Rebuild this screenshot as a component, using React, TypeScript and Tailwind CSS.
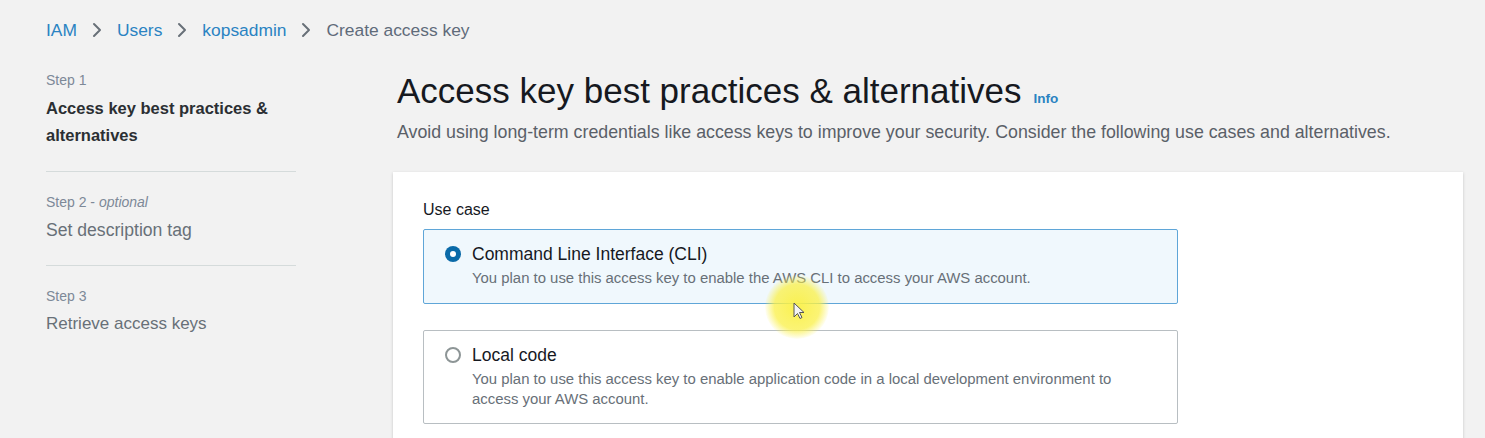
import React from "react";

function Chevron() {
  return (
    <svg width="10" height="16" viewBox="0 0 10 16" className="shrink-0">
      <path d="M2 2l6 6-6 6" fill="none" stroke="#687078" strokeWidth="2" strokeLinecap="round" strokeLinejoin="round" />
    </svg>
  );
}

function Radio({ checked }: { checked: boolean }) {
  return checked ? (
    <span className="mt-[3px] flex h-[16px] w-[16px] shrink-0 items-center justify-center rounded-full bg-[#0a6aa8]">
      <span className="h-[6px] w-[6px] rounded-full bg-white" />
    </span>
  ) : (
    <span className="mt-[3px] h-[16px] w-[16px] shrink-0 rounded-full border-2 border-[#8d9596] bg-white" />
  );
}

const steps = [
  { label: "Step 1", title: "Access key best practices & alternatives", cls: "text-[16.5px] font-bold leading-[27px] text-[#2b2f33]" },
  { label: "Step 2", optional: true, title: "Set description tag", cls: "text-[17.6px] leading-[26px] text-[#687078]" },
  { label: "Step 3", title: "Retrieve access keys", cls: "text-[17px] leading-[26px] text-[#687078]" },
];

export default function App() {
  return (
    <div
      className="relative h-[438px] w-[1485px] overflow-hidden bg-[#f2f2f2] text-[#16191f]"
      style={{ fontFamily: '"Liberation Sans", Arial, sans-serif' }}
    >
      {/* Breadcrumbs */}
      <nav className="flex items-center gap-[15px] pl-[46px] pt-[19px] text-[17.4px] leading-[22px]">
        <span className="text-[#2a83c2]">IAM</span>
        <Chevron />
        <span className="text-[#2a83c2]">Users</span>
        <Chevron />
        <span className="text-[#2a83c2]">kopsadmin</span>
        <Chevron />
        <span className="text-[#5f6b7a]">Create access key</span>
      </nav>

      <div className="flex pt-[30px]">
        {/* Wizard steps */}
        <aside className="ml-[46px] w-[250px] shrink-0">
          {steps.map((s, i) => (
            <div
              key={s.label}
              className={
                i === 0
                  ? "pb-[22px]"
                  : i === 1
                    ? "border-t border-[#d5dbdb] pt-[21px] pb-[22px]"
                    : "border-t border-[#d5dbdb] pt-[21px] pb-[20px]"
              }
            >
              <div className="text-[14px] leading-[18px] text-[#7d8998]">
                {s.label}
                {s.optional && (
                  <>
                    {" - "}
                    <i>optional</i>
                  </>
                )}
              </div>
              <div className={"mt-[6px] " + s.cls}>{s.title}</div>
            </div>
          ))}
        </aside>

        {/* Main content */}
        <main className="ml-[101px] mr-[22px] flex-1">
          <div className="flex items-baseline gap-[12px]">
            <h1 className="text-[35px] font-normal leading-[40px] text-[#16191f]">
              Access key best practices &amp; alternatives
            </h1>
            <span className="text-[13.5px] font-bold text-[#2a83c2]">Info</span>
          </div>
          <p className="mt-[10px] text-[17.8px] leading-[22px] text-[#5a6068]">
            Avoid using long-term credentials like access keys to improve your security. Consider the following use
            cases and alternatives.
          </p>

          <section className="-ml-[4px] mt-[29px] h-[300px] bg-white px-[30px] pt-[27px] shadow-[0_1px_3px_rgba(0,0,0,0.18)]">
            <div className="text-[16px] leading-[22px] text-[#16191f]">Use case</div>
            <div className="mt-[8px] flex w-[755px] flex-col gap-[26px]">
              <div className="flex gap-[11px] rounded-[2px] border border-[#5fa6d8] bg-[#f0f8fd] px-[21px] pt-[13px] pb-[15px]">
                <Radio checked />
                <div>
                  <div className="text-[17.5px] leading-[22px] text-[#16191f]">Command Line Interface (CLI)</div>
                  <div className="mt-[3px] text-[14.9px] leading-[20px] text-[#687078]">
                    You plan to use this access key to enable the AWS CLI to access your AWS account.
                  </div>
                </div>
              </div>
              <div className="flex gap-[11px] rounded-[2px] border border-[#b8bec2] bg-white px-[21px] pt-[13px] pb-[14px]">
                <Radio checked={false} />
                <div>
                  <div className="text-[17.5px] leading-[22px] text-[#16191f]">Local code</div>
                  <div className="mt-[3px] text-[14.9px] leading-[20px] text-[#687078]">
                    You plan to use this access key to enable application code in a local development environment to
                    access your AWS account.
                  </div>
                </div>
              </div>
            </div>
          </section>
        </main>
      </div>

      {/* Screen-recording cursor highlight */}
      <div className="pointer-events-none absolute left-[765px] top-[275px] h-[64px] w-[64px] rounded-full bg-[radial-gradient(circle,rgba(250,240,70,0.95)_0%,rgba(250,240,70,0.75)_50%,rgba(250,240,70,0)_72%)]" />
      <svg className="pointer-events-none absolute left-[793px] top-[302px]" width="12" height="18" viewBox="0 0 12 18">
        <path d="M1 1v14l3.5-3.5 2.5 5 2-1-2.5-5H11z" fill="#f4f4f4" stroke="#555" strokeWidth="1" strokeLinejoin="round" />
      </svg>
    </div>
  );
}
